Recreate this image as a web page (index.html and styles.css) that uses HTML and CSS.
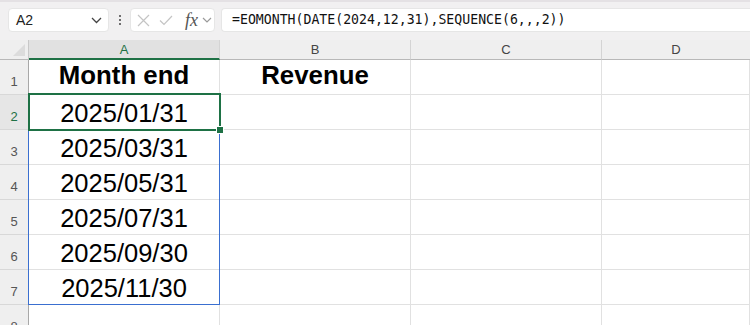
FILE: index.html
```html
<!DOCTYPE html>
<html>
<head>
<meta charset="utf-8">
<link rel="stylesheet" href="styles.css">
</head>
<body>
<div class="app">
  <div class="toolbar">
    <div class="namebox">
      <span class="name">A2</span>
      <svg class="chev" width="11" height="7" viewBox="0 0 11 7"><polyline points="1,1 5.5,5.5 10,1" fill="none" stroke="#444" stroke-width="1.3"/></svg>
    </div>
    <div class="dots"><i></i><i></i><i></i></div>
    <div class="fxbox">
      <svg class="ic" width="13" height="13" viewBox="0 0 13 13"><path d="M1 1 L12 12 M12 1 L1 12" stroke="#c4c4c4" stroke-width="1.2" fill="none"/></svg>
      <svg class="ic" width="14" height="11" viewBox="0 0 14 11"><polyline points="1,5.5 5,9.5 13,1" stroke="#c4c4c4" stroke-width="1.2" fill="none"/></svg>
      <span class="fx">fx</span>
      <svg class="chev2" width="10" height="6" viewBox="0 0 10 6"><polyline points="1,1 5,5 9,1" fill="none" stroke="#9a9a9a" stroke-width="1.2"/></svg>
    </div>
    <div class="formula">=EOMONTH(DATE(2024,12,31),SEQUENCE(6,,,2))</div>
  </div>
  <div class="sheet">
    <div class="grid">
      <div class="corner"><span class="tri"></span></div>
      <div class="colh sel">A</div>
      <div class="colh">B</div>
      <div class="colh">C</div>
      <div class="colh last">D</div>

      <div class="rowh">1</div>
      <div class="cell head">Month end</div>
      <div class="cell head">Revenue</div>
      <div class="cell"></div>
      <div class="cell"></div>

      <div class="rowh selr">2</div>
      <div class="cell">2025/01/31</div>
      <div class="cell"></div><div class="cell"></div><div class="cell"></div>

      <div class="rowh">3</div>
      <div class="cell">2025/03/31</div>
      <div class="cell"></div><div class="cell"></div><div class="cell"></div>

      <div class="rowh">4</div>
      <div class="cell">2025/05/31</div>
      <div class="cell"></div><div class="cell"></div><div class="cell"></div>

      <div class="rowh">5</div>
      <div class="cell">2025/07/31</div>
      <div class="cell"></div><div class="cell"></div><div class="cell"></div>

      <div class="rowh">6</div>
      <div class="cell">2025/09/30</div>
      <div class="cell"></div><div class="cell"></div><div class="cell"></div>

      <div class="rowh">7</div>
      <div class="cell">2025/11/30</div>
      <div class="cell"></div><div class="cell"></div><div class="cell"></div>

      <div class="rowh">8</div>
      <div class="cell"></div>
      <div class="cell"></div><div class="cell"></div><div class="cell"></div>
    </div>
    <div class="spill"></div>
    <div class="active"><span class="handle"></span></div>
  </div>
</div>
</body>
</html>
```

FILE: styles.css
```css
html, body {
  margin: 0;
  padding: 0;
  background: #ffffff;
  overflow: hidden;
}
.app {
  width: 750px;
  height: 325px;
  font-family: "Liberation Sans", Arial, sans-serif;
  overflow: hidden;
}
.toolbar {
  height: 40px;
  box-sizing: border-box;
  background: #f1f0f1;
  border-top: 2px solid #e4e1e4;
  display: flex;
  align-items: flex-start;
  padding: 6px 0 0 8px;
}
.namebox {
  width: 101px;
  height: 24px;
  box-sizing: border-box;
  background: #fff;
  border: 1px solid #e6e6e6;
  border-radius: 4px;
  display: flex;
  align-items: center;
  justify-content: space-between;
  padding: 0 6px 0 7px;
}
.name {
  font-size: 14px;
  color: #222;
}
.dots {
  width: 21px;
  height: 24px;
  display: flex;
  flex-direction: column;
  align-items: center;
  justify-content: center;
  gap: 2px;
}
.dots i {
  display: block;
  width: 2px;
  height: 2px;
  background: #444;
  border-radius: 1px;
}
.fxbox {
  width: 85px;
  height: 24px;
  box-sizing: border-box;
  background: #fff;
  border: 1px solid #e6e6e6;
  border-radius: 4px;
  display: flex;
  align-items: center;
  padding: 0 0 0 6px;
}
.fxbox .ic { margin-right: 9px; }
.fx {
  font-family: "Liberation Serif", "Times New Roman", serif;
  font-style: italic;
  font-size: 18px;
  color: #555;
  margin-left: 3px;
  margin-right: 4px;
  line-height: 1;
}
.formula {
  margin-left: 6px;
  flex: 1;
  height: 24px;
  box-sizing: border-box;
  background: #fff;
  border: 1px solid #e6e6e6;
  border-right: none;
  border-radius: 4px 0 0 4px;
  font-family: "DejaVu Sans Mono", "Liberation Mono", monospace;
  font-size: 13.2px;
  line-height: 22px;
  padding-left: 10px;
  color: #111;
  white-space: nowrap;
}
.sheet {
  position: relative;
}
.grid {
  display: grid;
  grid-template-columns: 29px 191px 191px 191px 1fr;
  grid-template-rows: 20px repeat(8, 35px);
}
.corner {
  background: #efefef;
  border-right: 1px solid #c8c8c8;
  border-bottom: 1px solid #b8b8b8;
  position: relative;
}
.tri {
  position: absolute;
  right: 3px;
  bottom: 3px;
  width: 0;
  height: 0;
  border-left: 12px solid transparent;
  border-bottom: 12px solid #dcdcdc;
}
.colh {
  background: #efefef;
  border-right: 1px solid #d4d4d4;
  border-bottom: 1px solid #b8b8b8;
  font-size: 13px;
  color: #444;
  display: flex;
  align-items: center;
  justify-content: center;
}
.colh.last { border-right: none; }
.colh.sel {
  background: #e1e1e1;
  color: #1e7145;
  border-bottom: 2px solid #1e7145;
  padding-top: 1px;
}
.rowh {
  background: #efefef;
  border-right: 1px solid #a8a8a8;
  border-bottom: 1px solid #d8d8d8;
  font-size: 13px;
  color: #555;
  display: flex;
  align-items: flex-end;
  justify-content: center;
  padding-bottom: 5px;
  box-sizing: border-box;
}
.rowh.selr {
  background: #e6e6e6;
  color: #1e7145;
}
.cell {
  border-right: 1px solid #e1e1e1;
  border-bottom: 1px solid #e1e1e1;
  display: flex;
  align-items: flex-end;
  justify-content: center;
  font-size: 25.5px;
  color: #000;
  line-height: 1;
  padding-bottom: 3px;
  box-sizing: border-box;
  white-space: nowrap;
}
.cell.head {
  font-weight: bold;
  font-size: 25.8px;
  padding-bottom: 5px;
}
.spill {
  position: absolute;
  left: 28px;
  top: 54px;
  width: 192px;
  height: 211px;
  box-sizing: border-box;
  border: 1px solid #3a6fd0;
}
.active {
  position: absolute;
  left: 28px;
  top: 53px;
  width: 193px;
  height: 38px;
  box-sizing: border-box;
  border: 2px solid #1e7145;
}
.handle {
  position: absolute;
  right: -5px;
  bottom: -5px;
  width: 6px;
  height: 6px;
  background: #1e7145;
  border: 1px solid #fff;
}
```
